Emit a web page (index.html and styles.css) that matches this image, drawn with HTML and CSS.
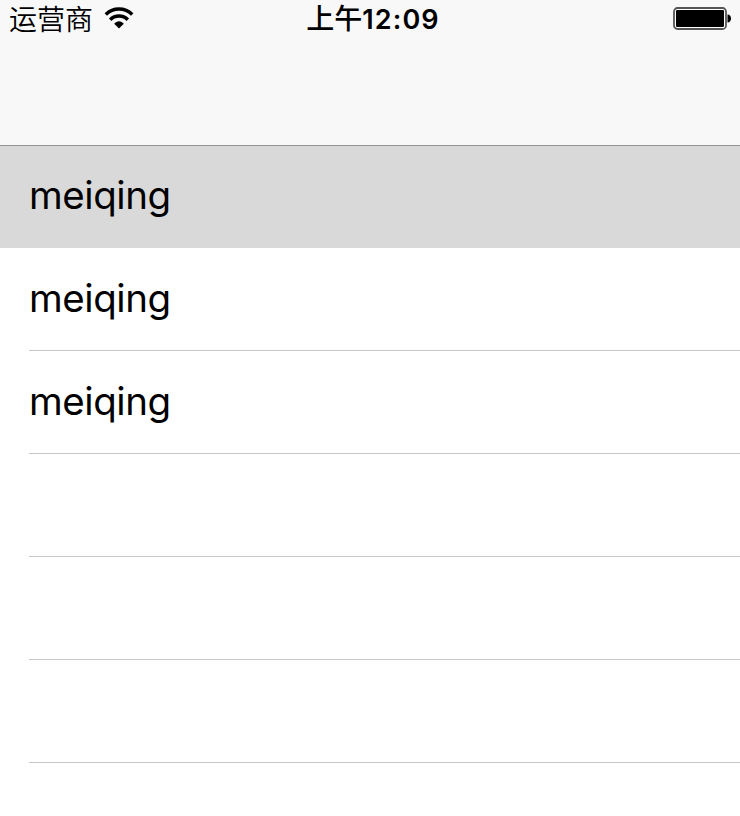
FILE: index.html
```html
<!DOCTYPE html>
<html lang="zh-CN">
<head>
<meta charset="utf-8">
<title>meiqing</title>
<link rel="stylesheet" href="styles.css">
</head>
<body>
<header class="navbar">
  <div class="status">
    <div class="status-left">
      <span class="carrier">运营商</span>
      <svg class="wifi" width="30" height="22" viewBox="0 0 30 22">
        <g fill="none" stroke="#000" stroke-width="3.5">
          <path d="M1.8 7.4C9.2.3 20.8.3 28.2 7.4"/>
          <path d="M6.2 12.7C11 7.9 19 7.9 23.8 12.7"/>
        </g>
        <path d="M15 21.6L10.2 16.8C12.9 13.4 17.1 13.4 19.8 16.8Z"/>
      </svg>
    </div>
    <div class="clock"><span class="period">上午</span><span class="time">12:09</span></div>
    <div class="status-right">
      <svg width="59" height="24" viewBox="0 0 59 24">
        <rect x="1" y="1" width="52" height="21" rx="3.5" fill="#fff" stroke="#555" stroke-width="1.8"/>
        <rect x="3" y="3" width="48" height="17" rx="1.2"/>
        <path d="M54.5 7.5C59.2 7.5 59.2 15.5 54.5 15.5Z"/>
      </svg>
    </div>
  </div>
</header>
<main class="list">
  <div class="row selected"><span class="label">meiqing</span></div>
  <div class="row"><span class="label">meiqing</span></div>
  <div class="row"><span class="label">meiqing</span></div>
  <div class="row"></div>
  <div class="row"></div>
  <div class="row"></div>
</main>
</body>
</html>
```
FILE: styles.css
```css
* {
  box-sizing: border-box;
}

body {
  margin: 0;
  height: 816px;
  overflow: hidden;
  background: #fff;
  color: #000;
  font-family: Inter, "Noto Sans CJK SC", sans-serif;
}

.navbar {
  height: 146px;
  background: #f8f8f8;
  border-bottom: 1px solid #949494;
}

.status {
  display: grid;
  grid-template-columns: 1fr auto 1fr;
  height: 38px;
  padding: 2px 8px 0 9px;
  align-items: center;
}

.status-left {
  display: flex;
  align-items: center;
  gap: 11px;
}

.carrier {
  height: 34px;
  font-size: 28px;
  font-weight: 350;
  line-height: 34px;
}

.wifi {
  display: block;
  margin-top: -4px;
}

.clock {
  display: flex;
  align-items: baseline;
  height: 34px;
  line-height: 32px;
  margin-left: 5px;
}

.period {
  font-size: 28px;
  font-weight: 450;
}

.time {
  font-size: 27px;
  font-weight: 600;
  letter-spacing: 1.1px;
}

.status-right {
  display: flex;
  justify-content: flex-end;
  margin-top: -2px;
}

.row {
  display: flex;
  height: 103px;
  margin-left: 29px;
  border-bottom: 1px solid #c8c7cc;
}

.row.selected {
  height: 102px;
  margin-left: 0;
  padding-left: 29px;
  background: #d9d9d9;
  border-bottom: 0;
}

.label {
  font-size: 38.5px;
  line-height: 100px;
  letter-spacing: -0.45px;
}

.selected .label {
  line-height: 98px;
}
```
